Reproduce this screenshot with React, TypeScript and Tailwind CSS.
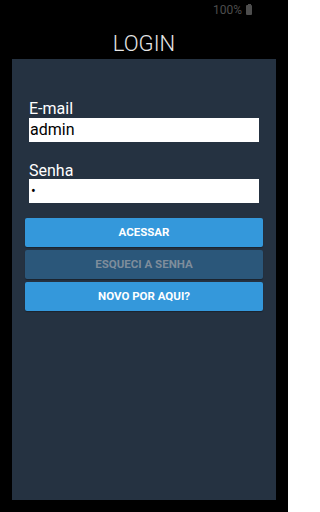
export default function App() {
  return (
    <div className="w-[288px] h-[512px] bg-black flex flex-col font-['Roboto',sans-serif] overflow-hidden">
      {/* Status bar */}
      <div className="h-[19px] flex items-center justify-end pr-[36px] gap-[4px] text-[12px] text-[#4d4d4d] leading-none">
        <span>100%</span>
        <span className="w-[6px] h-[10px] bg-[#4d4d4d] rounded-[1px] relative">
          <span className="absolute -top-[1px] left-[1.5px] w-[3px] h-[1px] bg-[#4d4d4d]" />
        </span>
      </div>

      {/* Title */}
      <div className="h-[40px] pt-[10px] flex items-center justify-center text-[22px] leading-none text-[#e6e6e6] font-light">
        LOGIN
      </div>

      {/* Panel */}
      <div className="mx-[12px] h-[441px] bg-[#253241] pt-[42px] flex flex-col">
        <div className="px-[17px] flex flex-col">
          <label className="text-[16px] leading-[16px] text-white">E-mail</label>
          <div className="mt-[1px] h-[24px] bg-white flex items-center pl-[1px] text-[16px] text-black">admin</div>
          <label className="mt-[21px] text-[16px] leading-[16px] text-white">Senha</label>
          <div className="h-[24px] bg-white flex items-center pl-[2px] text-[14px] text-black leading-none">•</div>
        </div>

        <div className="px-[13px] mt-[15px] flex flex-col gap-[3px]">
          <button className="h-[29px] rounded-[2px] bg-[#3498db] text-white text-[11.5px] font-bold shadow-[0_1px_1px_rgba(0,0,0,0.3)]">
            ACESSAR
          </button>
          <button className="h-[29px] rounded-[2px] bg-[#2b577a] text-[#7e8d9c] text-[11.5px] font-bold shadow-[0_1px_1px_rgba(0,0,0,0.3)]">
            ESQUECI A SENHA
          </button>
          <button className="h-[29px] rounded-[2px] bg-[#3498db] text-white text-[11.5px] font-bold shadow-[0_1px_1px_rgba(0,0,0,0.3)]">
            NOVO POR AQUI?
          </button>
        </div>
      </div>
    </div>
  );
}
